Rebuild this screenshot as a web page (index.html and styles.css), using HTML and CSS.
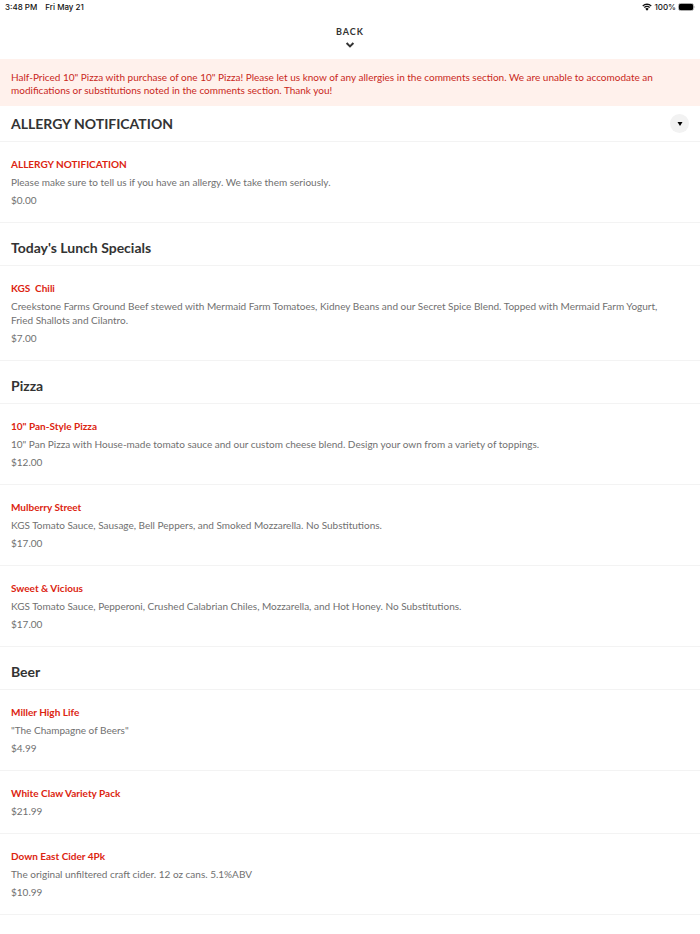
FILE: index.html
```html
<!DOCTYPE html>
<html lang="en">
<head>
    <meta charset="UTF-8">
    <meta name="viewport" content="width=device-width, initial-scale=1.0">
    <title>Menu</title>
    <link rel="stylesheet" href="styles.css">
</head>
<body>
    <div class="status-bar">
        <div class="status-left">
            <span>3:48 PM</span>
            <span>Fri May 21</span>
        </div>
        <div class="status-right">
            <svg class="wifi" viewBox="0 0 20 16" aria-hidden="true">
                <path d="M10 15.5l3.4-3.8a4.8 4.8 0 0 0-6.8 0z"/>
                <path d="M1.5 5.8a12.5 12.5 0 0 1 17 0M4.6 9.2a8 8 0 0 1 10.8 0" fill="none" stroke="#111" stroke-width="2.6"/>
            </svg>
            <span>100%</span>
            <svg class="battery" viewBox="0 0 18 8" aria-hidden="true">
                <rect x="0.5" y="0.5" width="15" height="7" rx="2" fill="#fff" stroke="#aaa"/>
                <rect x="1" y="1" width="14" height="6" rx="1.2"/>
                <path d="M16.5 2.5q1.2 1.5 0 3z" fill="#999"/>
            </svg>
        </div>
    </div>

    <header>
        <button type="button" class="back">
            <span>BACK</span>
            <svg viewBox="0 0 10 6" aria-hidden="true"><path d="M1.6 1L5 4.4 8.4 1"/></svg>
        </button>
    </header>

    <p class="notice">Half-Priced 10" Pizza with purchase of one 10" Pizza! Please let us know of any allergies in the comments section. We are unable to accomodate an modifications or substitutions noted in the comments section. Thank you!</p>

    <main>
        <div class="category-bar">
            <h2>ALLERGY NOTIFICATION</h2>
            <button type="button" class="toggle" aria-label="Choose category">
                <svg viewBox="0 0 6 4" aria-hidden="true"><path d="M0.5 0h5L3 4z"/></svg>
            </button>
        </div>
        <article class="item">
            <h3>ALLERGY NOTIFICATION</h3>
            <p>Please make sure to tell us if you have an allergy. We take them seriously.</p>
            <p class="price">$0.00</p>
        </article>

        <h2 class="category">Today's Lunch Specials</h2>
        <article class="item">
            <h3>KGS&nbsp; Chili</h3>
            <p>Creekstone Farms Ground Beef stewed with Mermaid Farm Tomatoes, Kidney Beans and our Secret Spice Blend. Topped with Mermaid Farm Yogurt, Fried Shallots and Cilantro.</p>
            <p class="price">$7.00</p>
        </article>

        <h2 class="category">Pizza</h2>
        <article class="item">
            <h3>10" Pan-Style Pizza</h3>
            <p>10" Pan Pizza with House-made tomato sauce and our custom cheese blend. Design your own from a variety of toppings.</p>
            <p class="price">$12.00</p>
        </article>
        <article class="item">
            <h3>Mulberry Street</h3>
            <p>KGS Tomato Sauce, Sausage, Bell Peppers, and Smoked Mozzarella. No Substitutions.</p>
            <p class="price">$17.00</p>
        </article>
        <article class="item">
            <h3>Sweet &amp; Vicious</h3>
            <p>KGS Tomato Sauce, Pepperoni, Crushed Calabrian Chiles, Mozzarella, and Hot Honey. No Substitutions.</p>
            <p class="price">$17.00</p>
        </article>

        <h2 class="category">Beer</h2>
        <article class="item">
            <h3>Miller High Life</h3>
            <p>"The Champagne of Beers"</p>
            <p class="price">$4.99</p>
        </article>
        <article class="item">
            <h3>White Claw Variety Pack</h3>
            <p class="price">$21.99</p>
        </article>
        <article class="item">
            <h3>Down East Cider 4Pk</h3>
            <p>The original unfiltered craft cider. 12 oz cans. 5.1%ABV</p>
            <p class="price">$10.99</p>
        </article>
        <article class="item">
            <h3>Miller Horse</h3>
        </article>
    </main>
</body>
</html>
```

FILE: styles.css
```css
* {
    box-sizing: border-box;
    margin: 0;
    padding: 0;
}

html {
    scrollbar-width: none;
}

body {
    background: #fff;
    color: #333;
    font-family: Lato, "Liberation Sans", sans-serif;
    font-size: 10px;
    line-height: 13px;
}

button {
    border: none;
    background: none;
    font-family: inherit;
    color: inherit;
    cursor: pointer;
}

.status-bar {
    display: flex;
    justify-content: space-between;
    padding: 0 4px 0 5px;
    color: #111;
    font-family: Inter, "Liberation Sans", sans-serif;
    font-size: 8px;
    font-weight: 500;
    line-height: 14px;
}

.status-left {
    display: flex;
    gap: 8px;
}

.status-right {
    display: flex;
    align-items: center;
    gap: 2px;
}

.wifi {
    width: 10px;
    height: 8px;
}

.battery {
    width: 18px;
    height: 8px;
}

header {
    display: flex;
    justify-content: center;
    padding: 12px 0 11px;
}

.back {
    display: flex;
    flex-direction: column;
    align-items: center;
    gap: 4px;
    font-size: 9px;
    font-weight: 700;
    line-height: 12px;
    letter-spacing: 1px;
}

.back svg {
    width: 10px;
    height: 6px;
    fill: none;
    stroke: #333;
    stroke-width: 2;
}

.notice {
    padding: 12px 11px 9px;
    background: #fff1ec;
    color: #c9281b;
}

h2 {
    font-size: 14px;
    font-weight: 700;
    line-height: 18px;
}

.category-bar {
    display: flex;
    justify-content: space-between;
    align-items: center;
    padding: 8px 11px;
    border-bottom: 1px solid #f3f3f3;
}

.toggle {
    display: flex;
    justify-content: center;
    align-items: center;
    width: 19px;
    height: 19px;
    border-radius: 50%;
    background: #f2f2f2;
}

.toggle svg {
    width: 6px;
    height: 4px;
}

.category {
    padding: 16px 11px 8px;
    border-bottom: 1px solid #f3f3f3;
}

.item {
    padding: 15px 20px 15px 11px;
    border-bottom: 1px solid #f3f3f3;
}

.item h3 {
    color: #dc2410;
    font-size: 10px;
    font-weight: 700;
    line-height: 14px;
}

.item p {
    margin-top: 4px;
    color: #707070;
    line-height: 14px;
}
```
